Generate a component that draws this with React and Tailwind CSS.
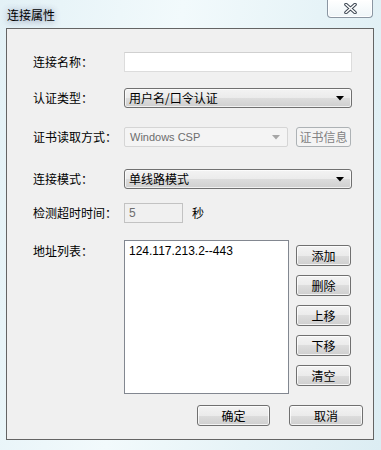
import React from "react";

const cjk = { fontFamily: '"Noto Sans CJK SC", "Liberation Sans", sans-serif' };
const latin = { fontFamily: '"Liberation Sans", "Noto Sans CJK SC", sans-serif' };

function Arrow({ color = "#000" }) {
  return (
    <svg width="8" height="5" viewBox="0 0 8 5" className="shrink-0">
      <path d="M0 0 H8 L4 4.5 Z" fill={color} />
    </svg>
  );
}

function Combo({ text, w }) {
  return (
    <div
      className={`h-[20px] ${w} rounded-[3px] border border-[#707070] bg-[linear-gradient(#f3f3f3_0%,#ebebeb_50%,#dddddd_50%,#cfcfcf_100%)] shadow-[inset_0_0_0_1px_rgba(255,255,255,0.7)] flex items-center pl-[4px] pr-[7px] justify-between`}
    >
      <span className="text-[12px] leading-none text-black" style={cjk}>{text}</span>
      <Arrow />
    </div>
  );
}

function Btn({ children, w = "w-[55px]", h = "h-[21px]", disabled = false }) {
  return (
    <div
      className={`${w} ${h} rounded-[3px] border flex items-center justify-center ${
        disabled
          ? "border-[#adb2b5] bg-[#f4f4f4] text-[#838383]"
          : "border-[#707070] bg-[linear-gradient(#f3f3f3_0%,#ebebeb_50%,#dddddd_50%,#cfcfcf_100%)] shadow-[inset_0_0_0_1px_rgba(255,255,255,0.75)] text-black"
      }`}
    >
      <span className="text-[12px] leading-none" style={cjk}>{children}</span>
    </div>
  );
}

function Label({ children }) {
  return (
    <div className="w-[91px] shrink-0 text-[12px] leading-none text-black" style={cjk}>
      {children}
    </div>
  );
}

export default function App() {
  return (
    <div className="w-[381px] h-[450px] overflow-hidden relative bg-[linear-gradient(100deg,#e3f1f6_0%,#f2fafc_40%,#e6f3f7_70%,#dcedf3_100%)] flex flex-col">
      {/* title bar */}
      <div className="h-[28px] shrink-0 flex items-start justify-between">
        <div
          className="pl-[7px] pt-[9px] text-[12px] leading-none text-black [text-shadow:0_0_6px_rgba(150,160,185,0.9),0_2px_6px_rgba(150,160,185,0.7)]"
          style={cjk}
        >
          连接属性
        </div>
        <div className="mr-[8px] w-[46px] h-[18px] rounded-b-[4px] border border-t-0 border-[#8b96a2] bg-[linear-gradient(#ffffff,#eef5f8)] shadow-[inset_0_0_0_1px_rgba(255,255,255,0.9)] flex items-center justify-center">
          <svg width="13" height="11" viewBox="0 0 13 11">
            <path d="M2 1.5 L11 9.5 M11 1.5 L2 9.5" stroke="#3c4652" strokeWidth="3.6" strokeLinecap="round" />
            <path d="M2 1.5 L11 9.5 M11 1.5 L2 9.5" stroke="#ffffff" strokeWidth="1.6" strokeLinecap="round" />
          </svg>
        </div>
      </div>

      {/* client area */}
      <div className="ml-[6px] mr-[7px] h-[412px] border border-[#646464] bg-[#f0f0f0] flex flex-col pl-[26px]">
        {/* row 1 */}
        <div className="mt-[23px] flex items-center">
          <Label>连接名称：</Label>
          <div className="w-[228px] h-[20px] bg-white border border-[#dcdcdc] border-t-[#d0d0d0]" />
        </div>

        {/* row 2 */}
        <div className="mt-[16px] flex items-center">
          <Label>认证类型：</Label>
          <Combo text="用户名/口令认证" w="w-[228px]" />
        </div>

        {/* row 3 */}
        <div className="mt-[19px] flex items-center">
          <Label>证书读取方式：</Label>
          <div className="w-[164px] h-[20px] rounded-[2px] border border-[#d5d5d5] bg-[#f4f4f4] flex items-center justify-between pl-[5px] pr-[7px]">
            <span className="text-[11px] leading-none text-[#6d6d6d]" style={latin}>Windows CSP</span>
            <Arrow color="#a6a6a6" />
          </div>
          <div className="ml-[8px]">
            <Btn w="w-[55px]" h="h-[20px]" disabled>证书信息</Btn>
          </div>
        </div>

        {/* row 4 */}
        <div className="mt-[22px] flex items-center">
          <Label>连接模式：</Label>
          <Combo text="单线路模式" w="w-[228px]" />
        </div>

        {/* row 5 */}
        <div className="mt-[14px] flex items-center">
          <Label>检测超时时间：</Label>
          <div className="w-[59px] h-[20px] border border-[#c2c2c2] bg-[#f0f0f0] flex items-center pl-[4px]">
            <span className="text-[12px] leading-none text-[#6d6d6d]" style={latin}>5</span>
          </div>
          <span className="ml-[9px] text-[12px] leading-none text-black" style={cjk}>秒</span>
        </div>

        {/* row 6 */}
        <div className="mt-[17px] flex items-start">
          <div className="pt-[5px]">
            <Label>地址列表：</Label>
          </div>
          <div className="w-[165px] h-[154px] bg-white border border-[#828790] pl-[4px] pt-[4px]">
            <div className="text-[12px] leading-none text-black" style={latin}>124.117.213.2--443</div>
          </div>
          <div className="ml-[7px] pt-[5px] flex flex-col gap-[9px]">
            <Btn>添加</Btn>
            <Btn>删除</Btn>
            <Btn>上移</Btn>
            <Btn>下移</Btn>
            <Btn>清空</Btn>
          </div>
        </div>

        {/* bottom buttons */}
        <div className="mt-[11px] flex justify-end gap-[19px] pr-[10px]">
          <Btn w="w-[73px]">确定</Btn>
          <Btn w="w-[74px]">取消</Btn>
        </div>
      </div>
    </div>
  );
}
